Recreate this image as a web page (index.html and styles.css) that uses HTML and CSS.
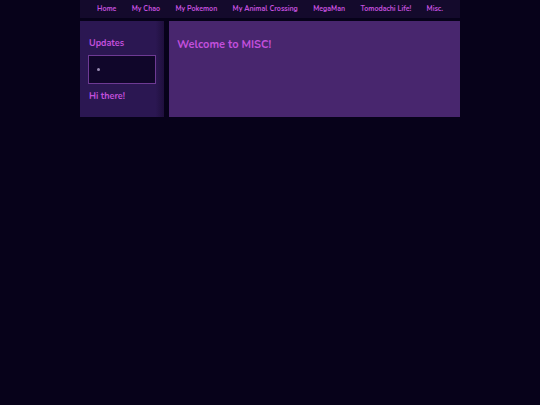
FILE: index.html
```html
<!DOCTYPE html>
<html>
<head>
<meta charset="utf-8">
<link rel="stylesheet" href="styles.css">
</head>
<body>
<div class="wrap">
  <nav class="nav">
    <a class="nav-link">Home</a>
    <a class="nav-link">My Chao</a>
    <a class="nav-link">My Pokemon</a>
    <a class="nav-link">My Animal Crossing</a>
    <a class="nav-link">MegaMan</a>
    <a class="nav-link">Tomodachi Life!</a>
    <a class="nav-link">Misc.</a>
  </nav>
  <div class="cols">
    <aside class="side">
      <h3 class="side-title">Updates</h3>
      <div class="updates">
        <ul class="up-list"><li></li></ul>
      </div>
      <h3 class="side-title hi">Hi there!</h3>
    </aside>
    <main class="main">
      <h2 class="main-title">Welcome to MISC!</h2>
    </main>
  </div>
</div>
</body>
</html>
```
FILE: styles.css
```css
html, body {
  margin: 0;
  padding: 0;
  background: #07021a;
  font-family: "Nunito", Lato, "Open Sans", sans-serif;
}
.wrap {
  width: 380px;
  margin: 0 auto;
}
.nav {
  height: 18px;
  background: #140a2c;
  display: flex;
  justify-content: space-between;
  align-items: center;
  padding: 0 17px;
}
.nav-link {
  color: #c24fdc;
  font-size: 7px;
  font-weight: 700;
  line-height: 18px;
}
.cols {
  display: flex;
  gap: 5px;
  margin-top: 3px;
}
.side {
  width: 84px;
  height: 96px;
  box-sizing: border-box;
  padding: 16px 8px 0 8px;
  background: linear-gradient(to right, #2b1752 0%, #2b1752 90%, #1f0f3d 100%);
}
.side-title {
  margin: 0;
  color: #c24fdc;
  font-size: 9px;
  font-weight: 700;
  line-height: 12px;
  padding-left: 1px;
}
.updates {
  margin-top: 6px;
  height: 29px;
  box-sizing: border-box;
  border: 1px solid #6e3a94;
  background: #10062a;
  display: flex;
  align-items: center;
}
.up-list {
  margin: 0;
  padding: 0 0 0 8px;
  list-style: none;
}
.up-list li {
  width: 3px;
  height: 3px;
  border-radius: 50%;
  background: #9a8cb4;
}
.hi {
  margin-top: 6px;
}
.main {
  flex: 1;
  height: 96px;
  box-sizing: border-box;
  padding: 17px 8px;
  background: #48266e;
}
.main-title {
  margin: 0;
  color: #c24fdc;
  font-size: 11px;
  font-weight: 700;
  line-height: 14px;
}
```
